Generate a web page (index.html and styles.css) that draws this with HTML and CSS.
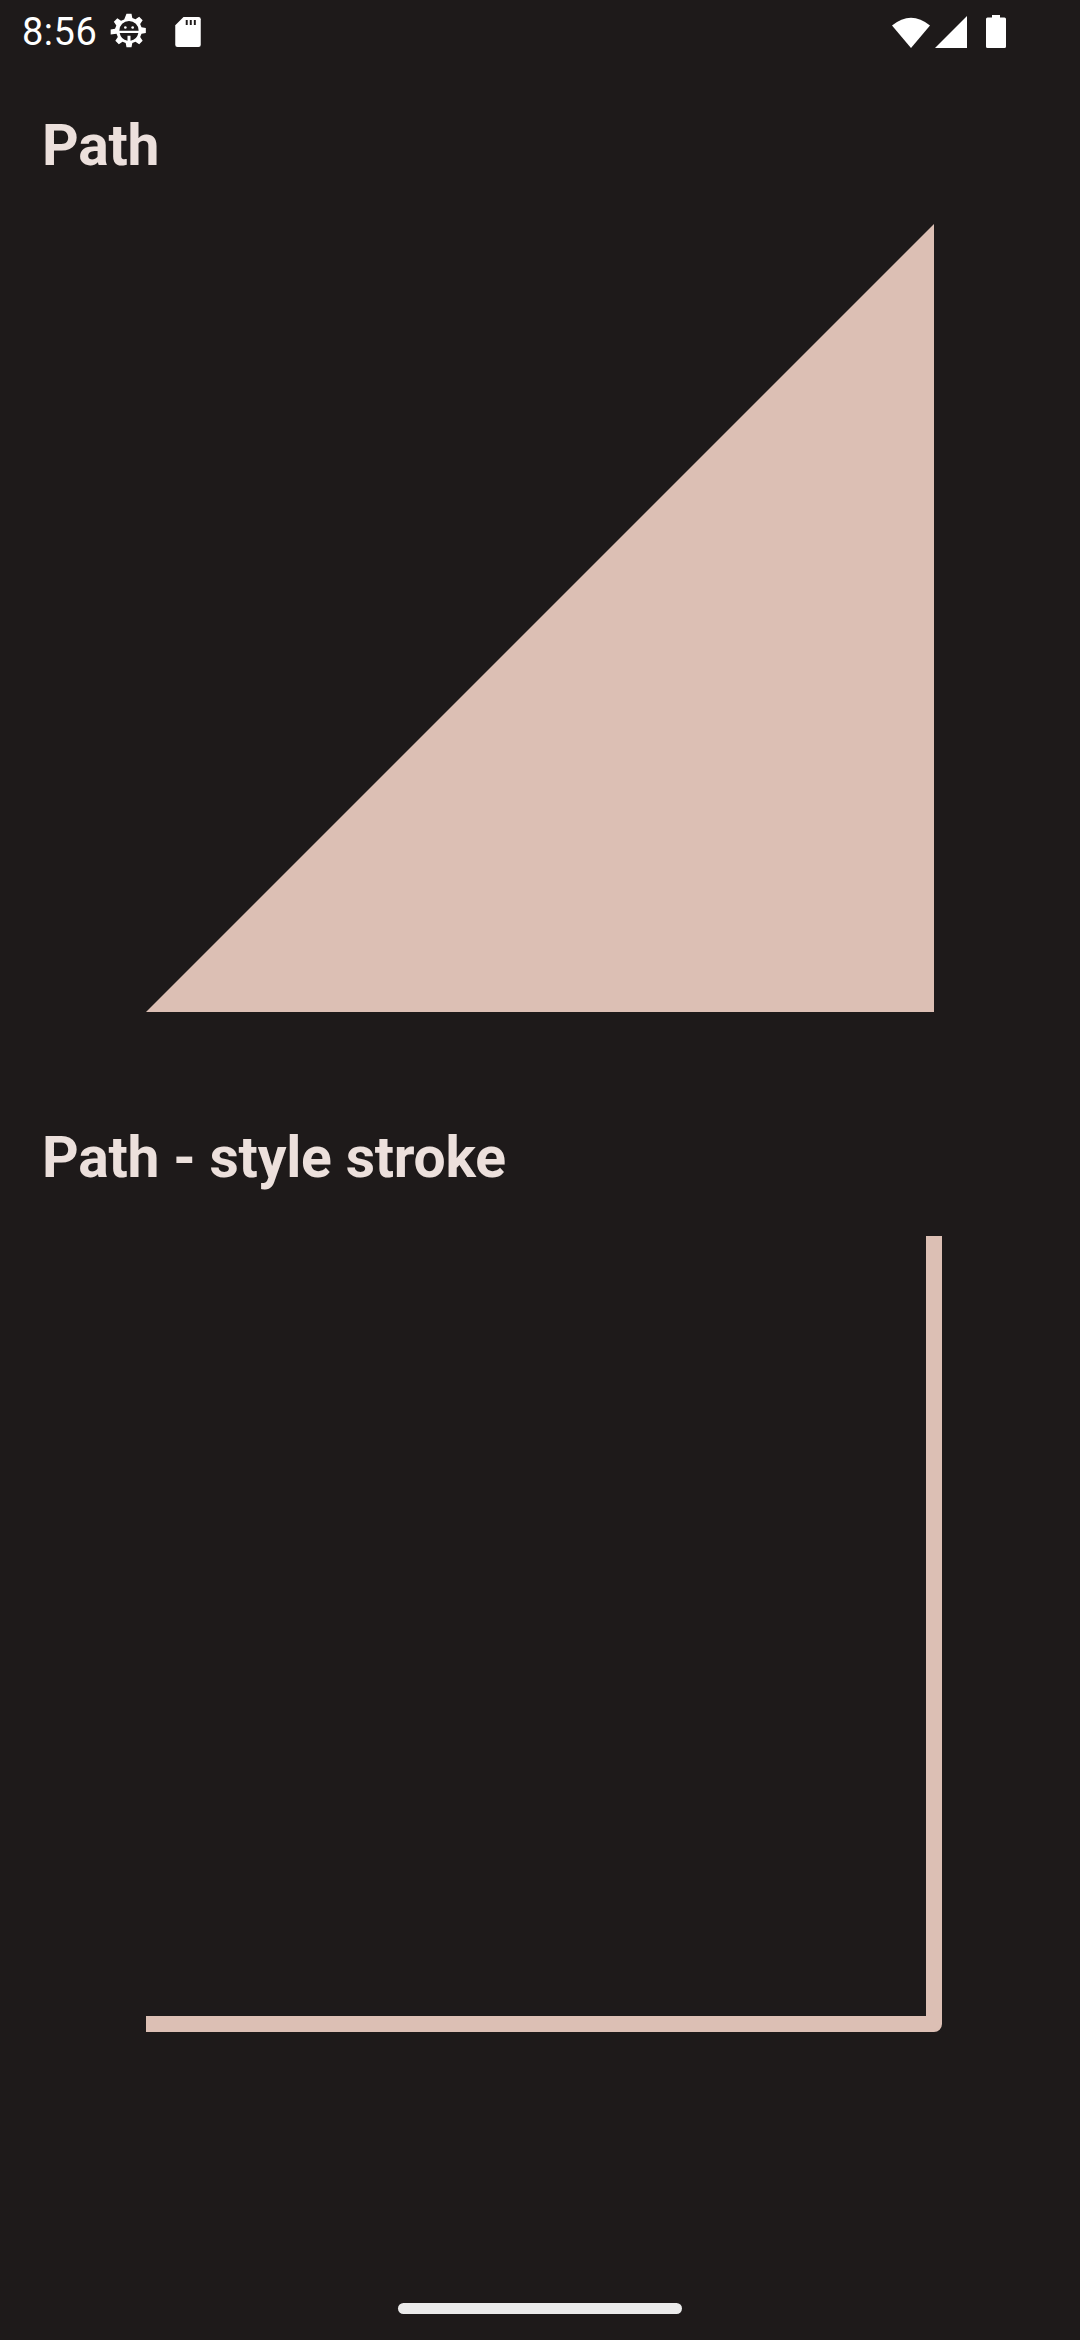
FILE: index.html
```html
<!DOCTYPE html>
<html lang="en">
<head>
  <meta charset="UTF-8">
  <title>Path</title>
  <link rel="stylesheet" href="styles.css">
</head>
<body>
  <div class="status-bar">
    <div class="status-left">
      <span class="time">8:56</span>
      <svg class="icon gear" viewBox="0 0 24 24">
        <path fill="#fff" d="M10.5 1h3l.5 2.6 1.9.8 2.2-1.5 2.1 2.1-1.5 2.2.8 1.9 2.6.5v3l-2.6.5-.8 1.9 1.5 2.2-2.1 2.1-2.2-1.5-1.9.8-.5 2.6h-3l-.5-2.6-1.9-.8-2.2 1.5-2.1-2.1 1.5-2.2-.8-1.9L1 13.5v-3l2.6-.5.8-1.9-1.5-2.2 2.1-2.1 2.2 1.5 1.9-.8z"/>
        <path fill="#1e1a1a" d="M6.2 11.2a5.8 5.8 0 0 1 11.6 0zM6.4 12.6h11.2a5.8 5.8 0 0 1-4.7 4.6v-3h-1.8v3a5.8 5.8 0 0 1-4.7-4.6z"/>
        <circle cx="9.8" cy="9.3" r=".8" fill="#fff"/>
        <circle cx="14.2" cy="9.3" r=".8" fill="#fff"/>
      </svg>
      <svg class="icon sd" viewBox="0 0 24 24">
        <path fill="#fff" d="M9 2h10a1.5 1.5 0 0 1 1.5 1.5v17A1.5 1.5 0 0 1 19 22H5a1.5 1.5 0 0 1-1.5-1.5V7.5z"/>
        <path fill="#1e1a1a" d="M10.5 4h1.3v3.3h-1.3zM13.2 4h1.3v3.3h-1.3zM15.9 4h1.3v3.3h-1.3z"/>
      </svg>
    </div>
    <div class="status-right">
      <svg class="icon wifi" viewBox="0 0 38 32">
        <path fill="#fff" d="M0 9.5Q19 -6 38 9.5L19 32z"/>
      </svg>
      <svg class="icon signal" viewBox="0 0 32 32">
        <path fill="#fff" d="M32 0v32H0z"/>
      </svg>
      <svg class="icon battery" viewBox="0 0 20 33">
        <path fill="#fff" d="M6 0h8v2.5h4.5a1.5 1.5 0 0 1 1.5 1.5v27.5a1.5 1.5 0 0 1-1.5 1.5h-17A1.5 1.5 0 0 1 0 31.5V4a1.5 1.5 0 0 1 1.5-1.5H6z"/>
      </svg>
    </div>
  </div>

  <main class="content">
    <section class="demo">
      <h2 class="demo-title">Path</h2>
      <div class="canvas">
        <svg width="788" height="788" viewBox="0 0 788 788">
          <path d="M788 0V788H0z" fill="#dcbfb4"/>
        </svg>
      </div>
    </section>

    <section class="demo">
      <h2 class="demo-title">Path - style stroke</h2>
      <div class="canvas">
        <svg width="800" height="796" viewBox="0 0 800 796">
          <path d="M788 0V788H0" fill="none" stroke="#dcbfb4" stroke-width="16" stroke-linejoin="round"/>
        </svg>
      </div>
    </section>
  </main>

  <div class="nav-bar">
    <div class="handle"></div>
  </div>
</body>
</html>
```

FILE: styles.css
```css
html, body {
  margin: 0;
  padding: 0;
}

body {
  width: 1080px;
  height: 2340px;
  background-color: #1e1a1a;
  color: #ece0dc;
  font-family: Roboto, "Noto Sans", sans-serif;
  display: flex;
  flex-direction: column;
  overflow: hidden;
}

/* Status bar */
.status-bar {
  height: 63px;
  display: flex;
  justify-content: space-between;
  align-items: center;
  padding: 0 74px 0 22px;
  color: #fff;
}
.status-left, .status-right {
  display: flex;
  align-items: center;
}
.time {
  font-size: 38px;
  letter-spacing: 0.5px;
  margin-right: 12px;
}
.icon {
  display: block;
}
.gear {
  width: 40px;
  height: 40px;
  margin-right: 21px;
}
.sd {
  width: 36px;
  height: 36px;
}
.wifi {
  width: 38px;
  height: 32px;
  margin-right: 5px;
}
.signal {
  width: 32px;
  height: 32px;
  margin-right: 19px;
}
.battery {
  width: 20px;
  height: 33px;
}

/* Content */
.content {
  flex: 1;
  display: flex;
  flex-direction: column;
  padding-top: 49px;
  gap: 112px;
}
.demo-title {
  margin: 0 0 0 42px;
  font-size: 57px;
  font-weight: 700;
  letter-spacing: -0.2px;
  line-height: 68px;
}
.canvas {
  padding: 44px 0 0 146px;
}
.canvas svg {
  display: block;
}

/* Navigation bar */
.nav-bar {
  height: 37px;
  padding-top: 26px;
  display: flex;
  justify-content: center;
}
.handle {
  width: 284px;
  height: 11px;
  border-radius: 6px;
  background-color: #ebebeb;
}
```
